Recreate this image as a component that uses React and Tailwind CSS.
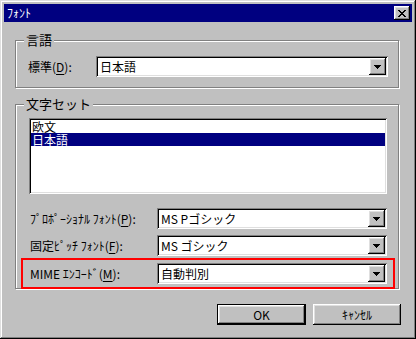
import React from 'react';

const raised = 'shadow-[inset_-1px_-1px_#000,inset_1px_1px_#fff,inset_-2px_-2px_#808080,inset_2px_2px_#dfdfdf]';
const sunken = 'shadow-[inset_1px_1px_#808080,inset_-1px_-1px_#fff,inset_2px_2px_#000,inset_-2px_-2px_#dfdfdf]';

const Arrow = () => (
  <svg width="7" height="4" viewBox="0 0 7 4" shapeRendering="crispEdges">
    <path d="M0 0h7v1H0zM1 1h5v1H1zM2 2h3v1H2zM3 3h1v1H3z" fill="#000" />
  </svg>
);

const Combo = ({ value, width }) => (
  <div className={`h-[21px] bg-white flex items-center ${sunken}`} style={{ width }}>
    <span className="flex-1 pl-[4px] leading-none">{value}</span>
    <div className={`w-[17px] h-[17px] mr-[2px] bg-[#c0c0c0] flex items-center justify-center ${raised}`}>
      <Arrow />
    </div>
  </div>
);

const Group = ({ label, className, children }) => (
  <div className={`relative border border-[#808080] shadow-[inset_1px_1px_#fff,1px_1px_#fff] ${className}`}>
    <span className="absolute -top-[8px] left-[8px] px-[2px] bg-[#c0c0c0] leading-[14px] text-[13px]">{label}</span>
    {children}
  </div>
);

const U = ({ children }) => <span className="underline underline-offset-2">{children}</span>;

export default function App() {
  return (
    <div className="w-[416px] h-[339px] bg-[#c0c0c0] p-[3px] flex flex-col text-[12px] text-black font-['Noto_Sans_CJK_JP','Liberation_Sans',sans-serif] shadow-[inset_-1px_-1px_#000,inset_1px_1px_#dfdfdf,inset_-2px_-2px_#808080,inset_2px_2px_#fff]">
      {/* Title bar */}
      <div className="h-[18px] bg-[#000080] flex items-center justify-between pl-[3px] pr-[2px] mt-[1px] mx-[1px]">
        <span className="text-white leading-none">ﾌｫﾝﾄ</span>
        <div className={`w-[16px] h-[14px] bg-[#c0c0c0] flex items-center justify-center ${raised}`}>
          <svg width="8" height="7" viewBox="0 0 8 7" shapeRendering="crispEdges">
            <path d="M0 0h2v1H0zM6 0h2v1H6zM1 1h2v1H1zM5 1h2v1H5zM2 2h4v1H2zM3 3h2v1H3zM2 4h4v1H2zM1 5h2v1H1zM5 5h2v1H5zM0 6h2v1H0zM6 6h2v1H6z" fill="#000" />
          </svg>
        </div>
      </div>

      {/* 言語 */}
      <Group label="言語" className="ml-[12px] mt-[18px] w-[384px] h-[48px]">
        <div className="flex items-center mt-[15px]">
          <span className="w-[67px] pl-[12px]">標準(<U>D</U>):</span>
          <div className="ml-[13px]">
            <Combo value="日本語" width={292} />
          </div>
        </div>
      </Group>

      {/* 文字セット */}
      <Group label="文字セット" className="ml-[12px] mt-[16px] w-[384px] h-[185px]">
        <div className={`ml-[13px] mt-[13px] w-[358px] h-[76px] bg-white p-[2px] ${sunken}`}>
          <div className="pl-[1px] h-[13px] flex items-center">欧文</div>
          <div className="pl-[1px] h-[13px] flex items-center bg-[#000080] text-white">日本語</div>
        </div>

        <div className="flex items-center mt-[14px]">
          <span className="w-[141px] pl-[14px]">ﾌﾟﾛﾎﾟｰｼｮﾅﾙ ﾌｫﾝﾄ(<U>P</U>):</span>
          <Combo value="MS Pゴシック" width={230} />
        </div>
        <div className="flex items-center mt-[6px]">
          <span className="w-[141px] pl-[14px]">固定ﾋﾟｯﾁ ﾌｫﾝﾄ(<U>F</U>):</span>
          <Combo value="MS ゴシック" width={230} />
        </div>
        <div className="ml-[5px] mt-[2px] w-[374px] h-[31px] border-2 border-[#ff0000] flex items-center">
          <span className="w-[134px] pl-[7px]">MIME ｴﾝｺｰﾄﾞ(<U>M</U>):</span>
          <Combo value="自動判別" width={230} />
        </div>
      </Group>

      {/* Buttons */}
      <div className="flex justify-end gap-[7px] mt-[15px] mr-[12px]">
        <div className="w-[89px] h-[21px] border border-black">
          <div className={`w-full h-full flex items-center justify-center ${raised}`}>OK</div>
        </div>
        <div className={`w-[88px] h-[21px] flex items-center justify-center ${raised}`}>ｷｬﾝｾﾙ</div>
      </div>
    </div>
  );
}
